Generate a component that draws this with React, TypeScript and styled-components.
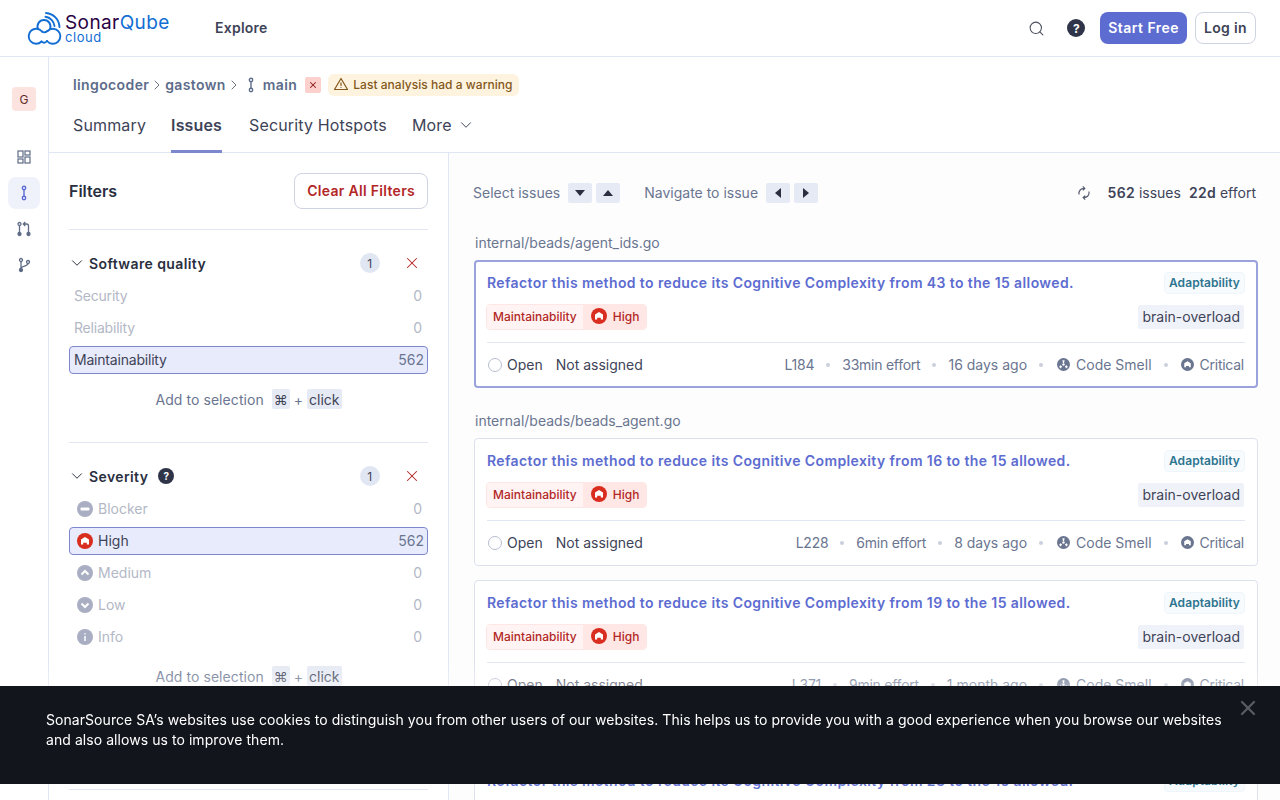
import React from "react";
import styled, { createGlobalStyle } from "styled-components";
import { ChevronDown, ChevronRight, Search, X } from "lucide-react";

const INK = "#2a2f40";
const SLATE = "#5d6c8a";
const BODY = "#3e4357";
const MUTED = "#6a7590";
const LINE = "#e1e6f3";
const INDIGO = "#5d6cd0";
const RED = "#b32727";

const GlobalStyle = createGlobalStyle`
  html, body {
    margin: 0;
    padding: 0;
    height: 100%;
    overflow: hidden;
    background: #fff;
    font-family: Inter, "Liberation Sans", sans-serif;
    font-size: 14px;
    color: ${BODY};
  }
  * { box-sizing: border-box; }
`;

const Page = styled.div`
  height: 800px;
  overflow: hidden;
  display: flex;
  flex-direction: column;
`;

const TopBar = styled.header`
  flex: none;
  height: 57px;
  display: flex;
  align-items: center;
  padding: 0 24px 0 27px;
  border-bottom: 1px solid ${LINE};
`;

const LogoBox = styled.div`
  display: flex;
  align-items: center;
  width: 188px;
`;

const LogoText = styled.div`
  display: flex;
  flex-direction: column;
  margin-left: 3px;
  line-height: 1;
`;

const LogoName = styled.span`
  font-size: 19px;
  font-weight: 400;
  line-height: 19px;
  letter-spacing: 0.4px;
  color: #290042;
  em {
    font-style: normal;
    color: #126ed3;
  }
`;

const LogoSub = styled.span`
  font-size: 13px;
  line-height: 13px;
  margin-top: -1px;
  letter-spacing: 0.55px;
  color: #126ed3;
`;

const NavLink = styled.span`
  font-size: 14px;
  font-weight: 600;
  letter-spacing: 0.25px;
  padding-bottom: 2px;
  color: ${BODY};
`;

const TopActions = styled.div`
  margin-left: auto;
  display: flex;
  align-items: center;
`;

const IconSlot = styled.span`
  display: flex;
  color: #4b5060;
  margin-right: 22px;
`;

const HelpDot = styled.span<{ $size: number }>`
  width: ${(p) => p.$size}px;
  height: ${(p) => p.$size}px;
  border-radius: 50%;
  background: #2f3449;
  color: #fff;
  font-size: ${(p) => p.$size - 6}px;
  font-weight: 700;
  display: inline-flex;
  align-items: center;
  justify-content: center;
`;

const StartButton = styled.button`
  height: 32px;
  margin-left: 15px;
  padding: 0 8px 2px;
  border: 0;
  border-radius: 8px;
  background: ${INDIGO};
  color: #fff;
  font: 600 14px Inter, sans-serif;
  letter-spacing: 0.45px;
`;

const LoginButton = styled.button`
  height: 32px;
  margin-left: 8px;
  padding: 0 8px 2px;
  border: 1px solid #cfd3e2;
  border-radius: 8px;
  background: #fff;
  color: ${BODY};
  font: 600 14px Inter, sans-serif;
  letter-spacing: 0.35px;
`;

const Body = styled.div`
  flex: 1;
  display: flex;
  min-height: 0;
`;

const SideNav = styled.nav`
  flex: none;
  width: 49px;
  border-right: 1px solid ${LINE};
  display: flex;
  flex-direction: column;
  align-items: center;
  padding-top: 30px;
`;

const Avatar = styled.div`
  width: 24px;
  height: 24px;
  border-radius: 4px;
  background: #fde3e0;
  color: #5c2a28;
  font-size: 12px;
  display: flex;
  align-items: center;
  justify-content: center;
  margin-bottom: 30px;
`;

const SideItem = styled.div<{ $active?: boolean }>`
  width: 32px;
  height: 32px;
  margin-bottom: 4px;
  border-radius: 8px;
  display: flex;
  align-items: center;
  justify-content: center;
  background: ${(p) => (p.$active ? "#eff2fb" : "transparent")};
  color: ${(p) => (p.$active ? INDIGO : "#5f6b86")};
`;

const Main = styled.main`
  flex: 1;
  min-width: 0;
  display: flex;
  flex-direction: column;
`;

const ProjectHead = styled.div`
  flex: none;
  height: 96px;
  padding: 17px 24px 0;
  border-bottom: 1px solid ${LINE};
`;

const Crumbs = styled.div`
  display: flex;
  align-items: center;
  height: 22px;
  color: ${SLATE};
  font-weight: 600;
  font-size: 14px;
  letter-spacing: 0.38px;
`;

const CrumbText = styled.span`
  padding-bottom: 2px;
`;

const CrumbSep = styled.span`
  display: flex;
  color: #6b7280;
`;

const BranchMark = styled.span`
  display: flex;
  margin: 0 4px 0 1px;
  color: ${SLATE};
`;

const FailBadge = styled.span`
  width: 16px;
  height: 16px;
  margin-left: 8px;
  border-radius: 2px;
  background: #fbd0cd;
  color: #8f1d1d;
  display: flex;
  align-items: center;
  justify-content: center;
`;

const WarnBadge = styled.span`
  display: flex;
  align-items: center;
  gap: 4px;
  height: 22px;
  margin-left: 7px;
  padding: 0 6px 2px 5px;
  border-radius: 6px;
  background: #fdf3df;
  color: #84581b;
  font-size: 12px;
  font-weight: 500;
  letter-spacing: 0.03px;
`;

const Tabs = styled.div`
  display: flex;
  gap: 27px;
  margin-top: 4px;
`;

const Tab = styled.span<{ $active?: boolean }>`
  height: 53px;
  display: flex;
  align-items: center;
  gap: 5px;
  font-size: 16px;
  letter-spacing: 0.15px;
  font-weight: ${(p) => (p.$active ? 600 : 400)};
  color: ${BODY};
  border-bottom: 3px solid ${(p) => (p.$active ? "#7d87ce" : "transparent")};
  &:first-child {
    margin-right: -2px;
  }
  &:last-child {
    margin-left: -2px;
  }
`;

const Split = styled.div`
  flex: 1;
  min-height: 0;
  display: flex;
`;

const FilterPanel = styled.aside`
  flex: none;
  width: 400px;
  padding: 20px 20px 0;
  border-right: 1px solid ${LINE};
`;

const FilterHead = styled.div`
  display: flex;
  align-items: center;
  justify-content: space-between;
  padding-bottom: 20px;
`;

const FilterTitle = styled.h2`
  margin: 0;
  font-size: 16px;
  font-weight: 600;
  color: ${INK};
`;

const ClearButton = styled.button`
  height: 36px;
  padding: 0 12px 2px;
  border: 1px solid #cfd3e2;
  border-radius: 8px;
  background: #fff;
  color: ${RED};
  font: 600 14px Inter, sans-serif;
  letter-spacing: 0.3px;
`;

const Facet = styled.section<{ $height: number }>`
  height: ${(p) => p.$height}px;
  border-top: 1px solid ${LINE};
  padding-top: 17px;
`;

const FacetHead = styled.div`
  height: 32px;
  display: flex;
  align-items: center;
  color: ${INK};
  font-weight: 600;
  font-size: 14px;
  letter-spacing: 0.4px;
  margin-left: -1px;
  margin-bottom: 3px;
`;

const FacetName = styled.span`
  margin-left: 3px;
  margin-right: 10px;
`;

const CountPill = styled.span`
  margin-left: auto;
  width: 20px;
  height: 20px;
  border-radius: 50%;
  background: #e1e6f3;
  color: ${BODY};
  font-size: 12px;
  font-weight: 400;
  display: flex;
  align-items: center;
  justify-content: center;
`;

const FacetClear = styled.span`
  display: flex;
  margin-left: 23px;
  margin-right: 7px;
  color: ${RED};
`;

const FacetRows = styled.div`
  display: flex;
  flex-direction: column;
  gap: 4px;
`;

const FacetRow = styled.div<{ $selected?: boolean; $inset: number }>`
  height: 28px;
  padding: 0 3px 0 ${(p) => p.$inset}px;
  display: flex;
  align-items: center;
  gap: 5px;
  border-radius: 4px;
  border: 1px solid ${(p) => (p.$selected ? "#7d87ce" : "transparent")};
  background: ${(p) => (p.$selected ? "#e8ebfc" : "transparent")};
  color: ${(p) => (p.$selected ? BODY : "#b3b8c6")};
`;

const RowName = styled.span<{ $tight?: boolean }>`
  padding-bottom: 2px;
  letter-spacing: ${(p) => (p.$tight ? "-0.2px" : "0")};
`;

const RowCount = styled.span<{ $selected?: boolean }>`
  margin-left: auto;
  padding: 0 ${(p) => (p.$selected ? 0 : 2)}px 2px 0;
  color: ${(p) => (p.$selected ? MUTED : "#b3b8c6")};
`;

const SelectionHint = styled.div`
  margin-top: 14px;
  height: 22px;
  display: flex;
  align-items: center;
  justify-content: center;
  color: ${MUTED};
`;

const HintLabel = styled.span`
  margin-right: 8px;
  letter-spacing: 0.07px;
`;

const Key = styled.span`
  height: 20px;
  padding: 0 2px;
  background: #e6eaf4;
  color: ${BODY};
  border-radius: 2px;
  display: inline-flex;
  align-items: center;
`;

const KeyPlus = styled.span`
  margin: 0 4px;
`;

const IssuesPanel = styled.section`
  flex: 1;
  min-width: 0;
  padding: 20px 22px 0 24px;
  background: #fdfdfe;
`;

const ListBar = styled.div`
  height: 40px;
  display: flex;
  align-items: center;
  color: ${MUTED};
  margin-bottom: 19px;
`;

const BarLabel = styled.span`
  padding-bottom: 2px;
`;

const ArrowKey = styled.span`
  width: 24px;
  height: 20px;
  margin-left: 4px;
  border-radius: 2px;
  background: #e6eaf4;
  display: flex;
  align-items: center;
  justify-content: center;
  color: ${INK};
  &:nth-child(2) {
    margin-left: 8px;
  }
`;

const BarGroup = styled.div`
  display: flex;
  align-items: center;
  margin-right: 24px;
`;

const Totals = styled.div`
  margin-left: auto;
  margin-right: 2px;
  display: flex;
  align-items: center;
  color: ${BODY};
  b {
    font-weight: 600;
    letter-spacing: 0.3px;
  }
`;

const RefreshSlot = styled.span`
  display: flex;
  color: #555b6e;
  margin-right: 16px;
`;

const TotalItem = styled.span`
  margin-right: 8px;
  padding-bottom: 2px;
  &:last-child {
    margin-right: 0;
  }
`;

const FileName = styled.div`
  height: 22px;
  margin: 0 0 6px 2px;
  line-height: 22px;
  color: ${MUTED};
`;

const GroupGap = styled.div<{ $height: number }>`
  height: ${(p) => p.$height}px;
`;

const Card = styled.article<{ $selected?: boolean }>`
  width: 784px;
  height: 128px;
  margin: 0 0 14px 1px;
  padding: ${(p) => (p.$selected ? "10px 11px 0 11px" : "11px 12px 0 12px")};
  border-radius: 4px;
  background: #fff;
  border: ${(p) => (p.$selected ? "2px solid #9aa3dc" : "1px solid #dde1ee")};
`;

const CardTop = styled.div`
  height: 22px;
  display: flex;
  align-items: center;
  justify-content: space-between;
`;

const IssueTitle = styled.a`
  color: ${INDIGO};
  font-weight: 600;
  font-size: 14px;
  letter-spacing: 0.39px;
  padding-bottom: 2px;
`;

const Attribute = styled.span`
  height: 22px;
  padding: 0 4px 2px;
  display: flex;
  align-items: center;
  border-radius: 4px;
  border: 1px solid #eff6fb;
  background: #f8fbfe;
  color: #2d7590;
  font-size: 12px;
  font-weight: 600;
  letter-spacing: 0.08px;
`;

const CardTags = styled.div`
  height: 26px;
  margin-top: 10px;
  padding-right: 1px;
  display: flex;
  align-items: center;
  justify-content: space-between;
`;

const Impact = styled.div`
  display: flex;
  height: 26px;
  border-radius: 4px;
  overflow: hidden;
  border: 1px solid #fde6e3;
  margin-left: -1px;
  font-size: 12px;
  font-weight: 500;
  color: ${RED};
`;

const ImpactName = styled.span`
  display: flex;
  align-items: center;
  padding: 0 6px 2px;
  background: #fff4f3;
`;

const ImpactLevel = styled.span`
  display: flex;
  align-items: center;
  gap: 6px;
  padding: 0 7px 2px 8px;
  background: #fee7e4;
`;

const Tag = styled.span`
  height: 24px;
  padding: 0 4px 2px;
  display: flex;
  align-items: center;
  border-radius: 2px;
  background: #f0f2f9;
  color: ${BODY};
`;

const CardFoot = styled.div`
  height: 46px;
  margin-top: 12px;
  padding: 0 1px 2px 0;
  border-top: 1px solid ${LINE};
  display: flex;
  align-items: center;
`;

const StatusDot = styled.span`
  width: 14px;
  height: 14px;
  margin: 0 5px 0 1px;
  border-radius: 50%;
  border: 1px solid #b9bed0;
`;

const Assignee = styled.span`
  margin-left: 13px;
`;

const MetaList = styled.div`
  margin-left: auto;
  display: flex;
  align-items: center;
  color: ${MUTED};
`;

const MetaText = styled.span<{ $tight?: boolean }>`
  letter-spacing: ${(p) => (p.$tight ? "-0.25px" : "0")};
`;

const MetaDot = styled.span`
  width: 4px;
  height: 4px;
  margin: 0 12px;
  border-radius: 50%;
  background: #c9cfdc;
`;

const MetaIcon = styled.span<{ $lead: number }>`
  display: flex;
  margin: 0 6px 0 ${(p) => p.$lead}px;
`;

const CookieBanner = styled.div`
  position: fixed;
  left: 0;
  right: 0;
  top: 686px;
  height: 98px;
  padding: 24px 46px;
  background: #12151c;
  color: #fff;
  font-size: 14px;
  line-height: 20px;
  letter-spacing: 0.06px;
  box-shadow: 0 -8px 16px rgba(255, 255, 255, 0.5);
`;

const CookieText = styled.p`
  margin: 0;
  width: 1190px;
`;

const CookieClose = styled.span`
  position: absolute;
  top: 10px;
  right: 20px;
  display: flex;
  color: #5a5d63;
`;

const BranchIcon = ({ size = 16 }: { size?: number }) => (
  <svg width={size} height={size} viewBox="0 0 16 16" fill="none" stroke="currentColor" strokeWidth="1.4">
    <circle cx="8" cy="3" r="1.7" />
    <circle cx="8" cy="13" r="1.7" />
    <path d="M8 4.7v6.6" />
  </svg>
);

const GridIcon = () => (
  <svg width="16" height="16" viewBox="0 0 16 16" fill="none" stroke="currentColor" strokeWidth="1.2">
    <rect x="2" y="2" width="5" height="6" />
    <rect x="9" y="2" width="5" height="4" />
    <rect x="2" y="10" width="5" height="4" />
    <rect x="9" y="8" width="5" height="6" />
  </svg>
);

const PullIcon = () => (
  <svg width="16" height="16" viewBox="0 0 16 16" fill="none" stroke="currentColor" strokeWidth="1.3">
    <circle cx="3.5" cy="3" r="1.5" />
    <circle cx="3.5" cy="13" r="1.5" fill="currentColor" />
    <circle cx="12.5" cy="13" r="1.5" fill="currentColor" />
    <path d="M3.5 4.5v7M12.5 11.5V5c0-1.200-.7-2-2-2H7.500M9.300 1 7.300 3l2 2" />
  </svg>
);

const ForkIcon = () => (
  <svg width="16" height="16" viewBox="0 0 16 16" fill="none" stroke="currentColor" strokeWidth="1.3">
    <circle cx="5" cy="3" r="1.500" />
    <circle cx="5" cy="13" r="1.500" fill="currentColor" />
    <circle cx="12" cy="5" r="1.500" />
    <path d="M5 4.500v7M12 6.500c0 2.500-5.500 2.500-7 4.500" />
  </svg>
);

const WarningIcon = () => (
  <svg width="16" height="16" viewBox="0 0 16 16" fill="none" stroke="#84581b" strokeWidth="1.2" strokeLinejoin="round">
    <path d="M8 2.500 14.500 13.500h-13Z" />
    <path d="M8 6.500v3.500M8 11.200v.8" />
  </svg>
);

const RefreshIcon = () => (
  <svg width="16" height="16" viewBox="0 0 16 16" fill="none" stroke="currentColor" strokeWidth="1.2">
    <path d="M3 9.500C2.300 6 5 3 8.500 3.400M6.800 1.400l2 2-2 2M13 6.500c.7 3.500-2 6.500-5.500 6.100M9.200 14.600l-2-2 2-2" />
  </svg>
);

const Triangle = ({ dir }: { dir: "up" | "down" | "left" | "right" }) => {
  const points = {
    up: "1,9 11,9 6,3",
    down: "1,3 11,3 6,9",
    left: "9,1 9,11 3,6",
    right: "3,1 3,11 9,6",
  }[dir];
  return (
    <svg width="12" height="12" viewBox="0 0 12 12" fill="currentColor">
      <polygon points={points} />
    </svg>
  );
};

const SonarCloud = () => (
  <svg width="35" height="33" viewBox="0 0 35 33" fill="none" stroke="#126ed3" strokeWidth="1.900" strokeLinecap="round">
    <path d="M14.500 29.500A7.500 7.500 0 1 1 15 19.500" />
    <path d="M20 29A7.500 7.500 0 1 0 20.500 19" />
    <path d="M11 17A6.500 6.500 0 1 1 23 17" />
    <path d="M14.500 29.500Q17.500 32 20 29" />
    <path d="M15 19.500Q17.500 21.500 20.500 19" />
    <path d="M18.500 4.800A10.500 10.500 0 0 1 27.500 14" />
    <path d="M19 1A14.500 14.500 0 0 1 32.500 15" />
  </svg>
);

type SeverityKind = "blocker" | "high" | "medium" | "low" | "info";

const SeverityIcon = ({ kind, color, size = 16 }: { kind: SeverityKind; color: string; size?: number }) => (
  <svg width={size} height={size} viewBox="0 0 16 16">
    <circle cx="8" cy="8" r="8" fill={color} />
    {kind === "blocker" && <rect x="3.500" y="6.500" width="9" height="3" rx="1" fill="#fff" />}
    {kind === "high" && <path d="M8 4 12 6.600V11.500H9.800V9.800H6.200V11.500H4V6.600Z" fill="#fff" />}
    {kind === "medium" && <path d="M4.500 9.500 8 6l3.500 3.500" fill="none" stroke="#fff" strokeWidth="2" />}
    {kind === "low" && <path d="M4.500 6.500 8 10l3.500-3.500" fill="none" stroke="#fff" strokeWidth="2" />}
    {kind === "info" && <path d="M8 4.200v1.400M8 7v5" fill="none" stroke="#fff" strokeWidth="1.500" />}
  </svg>
);

const SmellIcon = () => (
  <svg width="13" height="13" viewBox="0 0 14 14">
    <circle cx="7" cy="7" r="7" fill={MUTED} />
    <circle cx="7" cy="7" r="1.300" fill="#fff" />
    <path d="M5.800 2.300h2.400L7.600 5.300H6.400ZM2.300 9.800l1.200-2 2 1.200-1.400 2.200ZM11.700 9.800l-1.200-2-2 1.200 1.400 2.200Z" fill="#fff" />
  </svg>
);

type Issue = {
  line: string;
  effort: string;
  age: string;
  title: string;
  selected?: boolean;
};

const issueTitle = (from: number) =>
  `Refactor this method to reduce its Cognitive Complexity from ${from} to the 15 allowed.`;

const IssueCard = ({ issue }: { issue: Issue }) => (
  <Card $selected={issue.selected}>
    <CardTop>
      <IssueTitle>{issue.title}</IssueTitle>
      <Attribute>Adaptability</Attribute>
    </CardTop>
    <CardTags>
      <Impact>
        <ImpactName>Maintainability</ImpactName>
        <ImpactLevel>
          <SeverityIcon kind="high" color="#d92d20" />
          High
        </ImpactLevel>
      </Impact>
      <Tag>brain-overload</Tag>
    </CardTags>
    <CardFoot>
      <StatusDot />
      <span>Open</span>
      <Assignee>Not assigned</Assignee>
      <MetaList>
        <MetaText $tight>{issue.line}</MetaText>
        <MetaDot />
        <MetaText $tight>{issue.effort}</MetaText>
        <MetaDot />
        <MetaText>{issue.age}</MetaText>
        <MetaDot />
        <MetaIcon $lead={2}>
          <SmellIcon />
        </MetaIcon>
        <MetaText>Code Smell</MetaText>
        <MetaDot />
        <MetaIcon $lead={1}>
          <SeverityIcon kind="high" color={MUTED} size={13} />
        </MetaIcon>
        <MetaText $tight>Critical</MetaText>
      </MetaList>
    </CardFoot>
  </Card>
);

const severities: { name: string; kind: SeverityKind; count: number; selected?: boolean }[] = [
  { name: "Blocker", kind: "blocker", count: 0 },
  { name: "High", kind: "high", count: 562, selected: true },
  { name: "Medium", kind: "medium", count: 0 },
  { name: "Low", kind: "low", count: 0 },
  { name: "Info", kind: "info", count: 0 },
];

const qualities = [
  { name: "Security", count: 0 },
  { name: "Reliability", count: 0 },
  { name: "Maintainability", count: 562, selected: true },
];

const Hint = () => (
  <SelectionHint>
    <HintLabel>Add to selection</HintLabel>
    <Key>⌘</Key>
    <KeyPlus>+</KeyPlus>
    <Key>click</Key>
  </SelectionHint>
);

const App = () => (
  <>
    <GlobalStyle />
    <Page>
      <TopBar>
        <LogoBox>
          <SonarCloud />
          <LogoText>
            <LogoName>
              Sonar<em>Qube</em>
            </LogoName>
            <LogoSub>cloud</LogoSub>
          </LogoText>
        </LogoBox>
        <NavLink>Explore</NavLink>
        <TopActions>
          <IconSlot>
            <Search size={17} strokeWidth={1.500} />
          </IconSlot>
          <HelpDot $size={18}>?</HelpDot>
          <StartButton>Start Free</StartButton>
          <LoginButton>Log in</LoginButton>
        </TopActions>
      </TopBar>
      <Body>
        <SideNav>
          <Avatar>G</Avatar>
          <SideItem>
            <GridIcon />
          </SideItem>
          <SideItem $active>
            <BranchIcon />
          </SideItem>
          <SideItem>
            <PullIcon />
          </SideItem>
          <SideItem>
            <ForkIcon />
          </SideItem>
        </SideNav>
        <Main>
          <ProjectHead>
            <Crumbs>
              <CrumbText>lingocoder</CrumbText>
              <CrumbSep>
                <ChevronRight size={16} strokeWidth={1.500} />
              </CrumbSep>
              <CrumbText>gastown</CrumbText>
              <CrumbSep>
                <ChevronRight size={16} strokeWidth={1.500} />
              </CrumbSep>
              <BranchMark>
                <BranchIcon />
              </BranchMark>
              <CrumbText>main</CrumbText>
              <FailBadge>
                <X size={10} strokeWidth={2.500} />
              </FailBadge>
              <WarnBadge>
                <WarningIcon />
                Last analysis had a warning
              </WarnBadge>
            </Crumbs>
            <Tabs>
              <Tab>Summary</Tab>
              <Tab $active>Issues</Tab>
              <Tab>Security Hotspots</Tab>
              <Tab>
                More
                <ChevronDown size={18} strokeWidth={1.300} />
              </Tab>
            </Tabs>
          </ProjectHead>
          <Split>
            <FilterPanel>
              <FilterHead>
                <FilterTitle>Filters</FilterTitle>
                <ClearButton>Clear All Filters</ClearButton>
              </FilterHead>
              <Facet $height={213}>
                <FacetHead>
                  <ChevronDown size={18} strokeWidth={1.300} />
                  <FacetName>Software quality</FacetName>
                  <CountPill>1</CountPill>
                  <FacetClear>
                    <X size={18} strokeWidth={1.400} />
                  </FacetClear>
                </FacetHead>
                <FacetRows>
                  {qualities.map((q) => (
                    <FacetRow key={q.name} $selected={q.selected} $inset={4}>
                      <RowName $tight>{q.name}</RowName>
                      <RowCount $selected={q.selected}>{q.count}</RowCount>
                    </FacetRow>
                  ))}
                </FacetRows>
                <Hint />
              </Facet>
              <Facet $height={347}>
                <FacetHead>
                  <ChevronDown size={18} strokeWidth={1.300} />
                  <FacetName>Severity</FacetName>
                  <HelpDot $size={16}>?</HelpDot>
                  <CountPill>1</CountPill>
                  <FacetClear>
                    <X size={18} strokeWidth={1.400} />
                  </FacetClear>
                </FacetHead>
                <FacetRows>
                  {severities.map((s) => (
                    <FacetRow key={s.name} $selected={s.selected} $inset={7}>
                      <SeverityIcon kind={s.kind} color={s.selected ? "#d92d20" : "#a9aec2"} />
                      <RowName>{s.name}</RowName>
                      <RowCount $selected={s.selected}>{s.count}</RowCount>
                    </FacetRow>
                  ))}
                </FacetRows>
                <Hint />
              </Facet>
              <Facet $height={20} />
            </FilterPanel>
            <IssuesPanel>
              <ListBar>
                <BarGroup>
                  <BarLabel>Select issues</BarLabel>
                  <ArrowKey>
                    <Triangle dir="down" />
                  </ArrowKey>
                  <ArrowKey>
                    <Triangle dir="up" />
                  </ArrowKey>
                </BarGroup>
                <BarGroup>
                  <BarLabel>Navigate to issue</BarLabel>
                  <ArrowKey>
                    <Triangle dir="left" />
                  </ArrowKey>
                  <ArrowKey>
                    <Triangle dir="right" />
                  </ArrowKey>
                </BarGroup>
                <Totals>
                  <RefreshSlot>
                    <RefreshIcon />
                  </RefreshSlot>
                  <TotalItem>
                    <b>562</b> issues
                  </TotalItem>
                  <TotalItem>
                    <b>22d</b> effort
                  </TotalItem>
                </Totals>
              </ListBar>
              <FileName>internal/beads/agent_ids.go</FileName>
              <IssueCard
                issue={{ line: "L184", effort: "33min effort", age: "16 days ago", title: issueTitle(43), selected: true }}
              />
              <GroupGap $height={8} />
              <FileName>internal/beads/beads_agent.go</FileName>
              <IssueCard issue={{ line: "L228", effort: "6min effort", age: "8 days ago", title: issueTitle(16) }} />
              <IssueCard issue={{ line: "L371", effort: "9min effort", age: "1 month ago", title: issueTitle(19) }} />
              {/* the next file name sits behind the cookie banner */}
              <GroupGap $height={36} />
              <IssueCard issue={{ line: "L96", effort: "13min effort", age: "1 month ago", title: issueTitle(28) }} />
            </IssuesPanel>
          </Split>
        </Main>
      </Body>
    </Page>
    <CookieBanner>
      <CookieText>
        SonarSource SA’s websites use cookies to distinguish you from other users of our websites. This helps us to
        provide you with a good experience when you browse our websites and also allows us to improve them.
      </CookieText>
      <CookieClose>
        <X size={24} strokeWidth={2.200} />
      </CookieClose>
    </CookieBanner>
  </>
);

export default App;
